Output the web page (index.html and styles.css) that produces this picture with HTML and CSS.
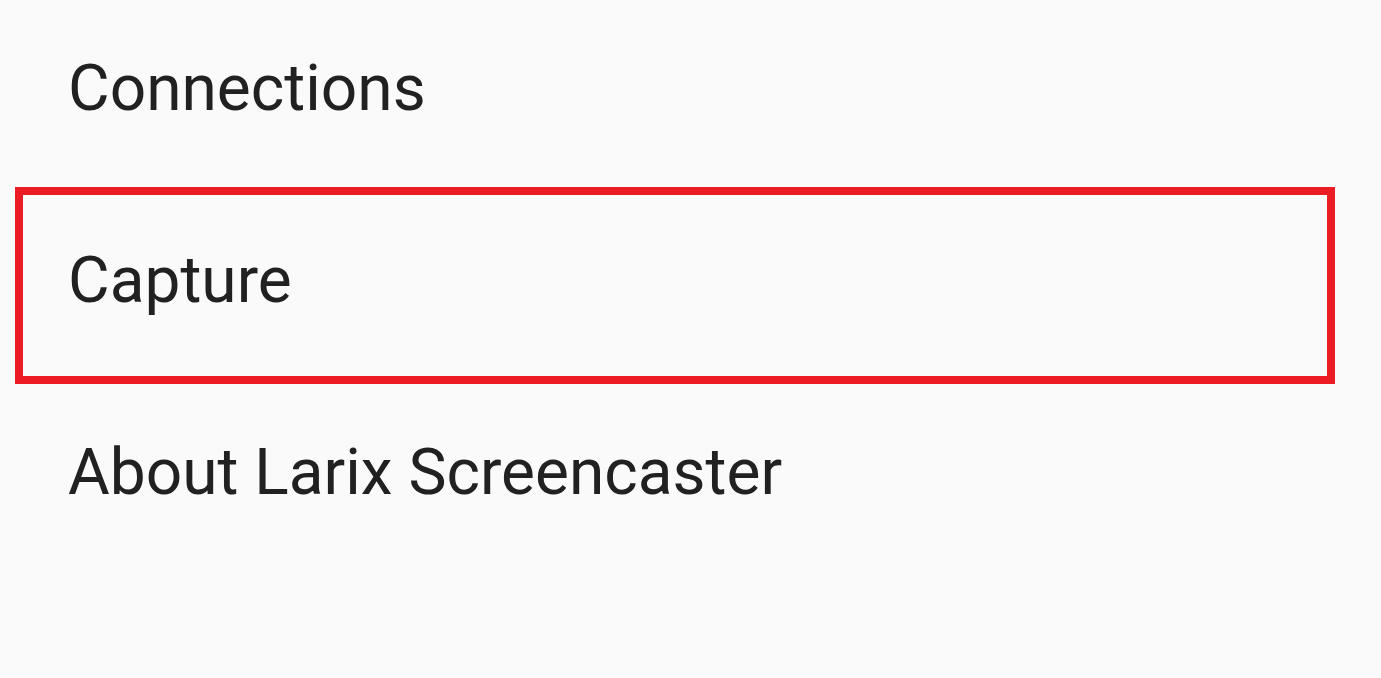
FILE: index.html
```html
<!DOCTYPE html>
<html lang="en">
<head>
<meta charset="utf-8">
<title>Settings</title>
<link rel="stylesheet" href="styles.css">
</head>
<body>
<ul class="menu">
  <li class="menu-item">Connections</li>
  <li class="menu-item menu-item--highlight">Capture</li>
  <li class="menu-item">About Larix Screencaster</li>
</ul>
</body>
</html>
```
FILE: styles.css
```css
html, body {
  margin: 0;
  padding: 0;
  background: #fafafa;
}
body {
  width: 1381px;
  height: 678px;
  overflow: hidden;
  font-family: Roboto, "Noto Sans", sans-serif;
  color: #212121;
}
.menu {
  list-style: none;
  margin: 0;
  padding: 0;
}
.menu-item {
  box-sizing: border-box;
  height: 187px;
  padding: 51px 0 0 68px;
  font-size: 64px;
  line-height: 75px;
  white-space: nowrap;
}
.menu-item--highlight {
  width: 1320px;
  height: 197px;
  margin-left: 15px;
  padding: 48px 0 0 45px;
  border: 8px solid #ec1c24;
}
```
